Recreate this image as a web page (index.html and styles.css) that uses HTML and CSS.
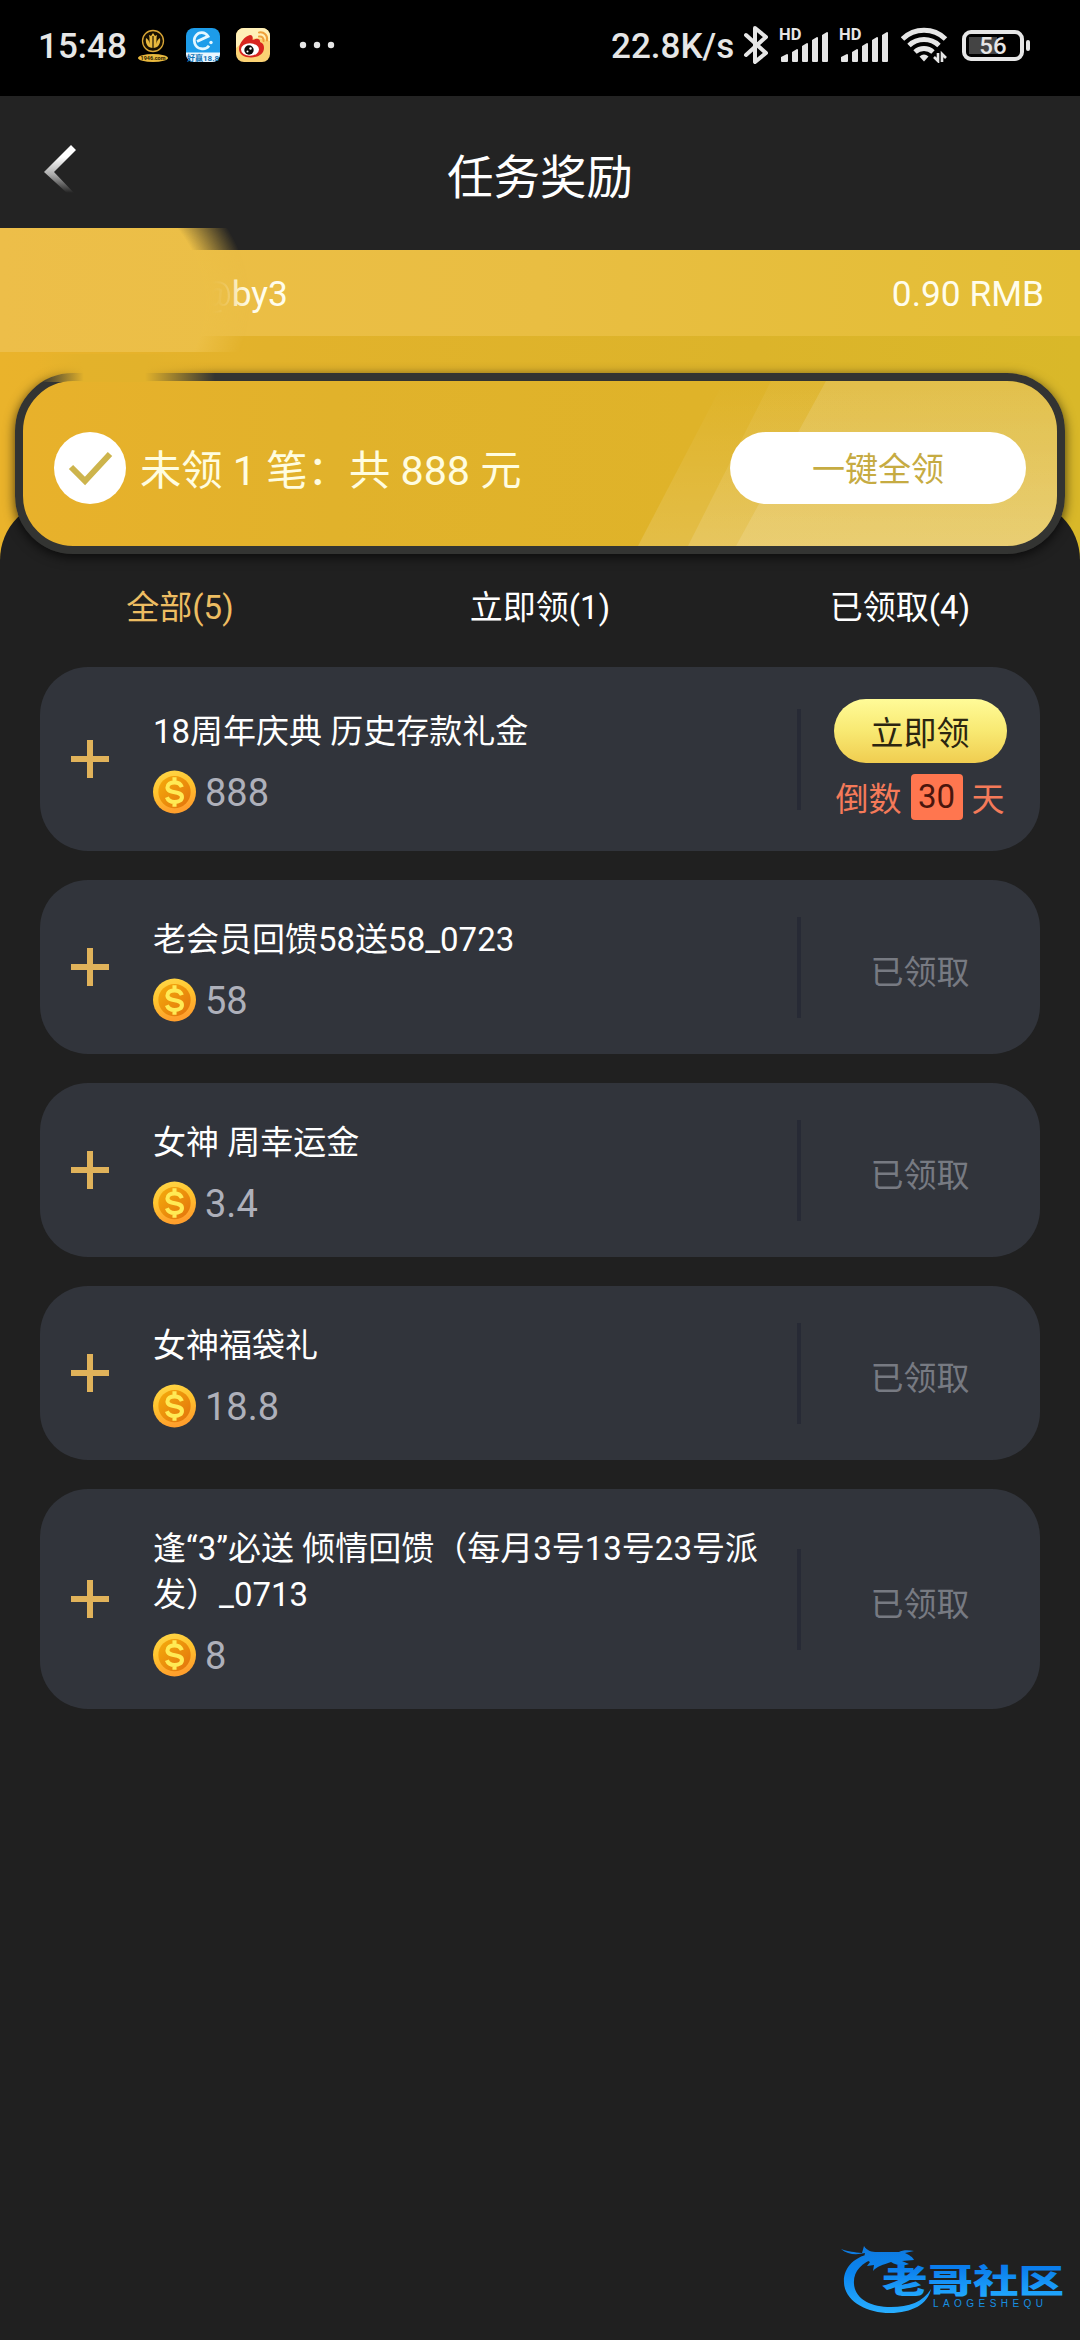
FILE: index.html
```html
<!DOCTYPE html>
<html lang="zh-CN">
<head>
<meta charset="utf-8">
<title>任务奖励</title>
<link rel="stylesheet" href="styles.css">
</head>
<body>
<svg class="defs" width="0" height="0" aria-hidden="true">
  <defs>
    <linearGradient id="coinRim" x1="0" y1="0" x2="0.3" y2="1"><stop offset="0" stop-color="#ffd84a"/><stop offset="0.5" stop-color="#ffc42e"/><stop offset="1" stop-color="#ff9f2c"/></linearGradient>
    <linearGradient id="coinFace" x1="0" y1="0" x2="1" y2="1"><stop offset="0" stop-color="#f5ad0c"/><stop offset="1" stop-color="#e2720c"/></linearGradient>
    <symbol id="coin" viewBox="0 0 44 44">
      <circle cx="22" cy="22" r="22" fill="url(#coinRim)"/>
      <circle cx="22" cy="22" r="16.5" fill="url(#coinFace)"/>
      <path d="M22 7v5M22 32v5M29.500 17c-1.200-3.200-4-4.800-7.500-4.800-4.200 0-7.200 2-7.200 5.200 0 6.600 14.800 3.200 14.800 9.600 0 3.300-3.200 5.200-7.600 5.200-3.800 0-6.600-1.600-7.800-4.800" fill="none" stroke="#ffea55" stroke-width="4.200"/>
    </symbol>
    <symbol id="signal" viewBox="0 0 52 36">
      <path d="M3 35q-1 0-1-1v-4l6-3q1 0 1 1v6q0 1-1 1zM14 35q-1 0-1-1V25l5-3q1 0 1 1v11q0 1-1 1zM24 35q-1 0-1-1V19l5-3q1 0 1 1v17q0 1-1 1zM34 35q-1 0-1-1V13l5-3q1 0 1 1v23q0 1-1 1zM44 35q-1 0-1-1V8l5-3q1 0 1 1v28q0 1-1 1z" fill="#e6e6e6"/>
    </symbol>
  </defs>
</svg>

<div class="statusbar">
  <div class="status-left">
    <span class="clock">15:48</span>
    <svg class="app-icon" viewBox="0 0 34 34">
      <circle cx="17" cy="13" r="10.500" fill="#171002" stroke="#d9a636" stroke-width="1.300"/>
      <path d="M17 20c-5 0-8-4-7-10 2 1 3 3 4 6-1-3 0-6-1-9l2 1 2-3 2 3 2-1c-1 3 0 6-1 9 1-3 2-5 4-6 1 6-2 10-7 10z" fill="#e8b83e"/>
      <path d="M17 8v12" stroke="#171002" stroke-width="1.200"/>
      <ellipse cx="17" cy="30" rx="15" ry="4" fill="#e8b83e"/>
      <text x="17" y="32" text-anchor="middle" class="badge-text">1946.com</text>
    </svg>
    <svg class="app-icon" viewBox="0 0 34 34">
      <rect width="34" height="34" rx="8" fill="#1d9ce9"/>
      <path d="M0 24.500h34V26a8 8 0 0 1-8 8H8a8 8 0 0 1-8-8z" fill="#eaf7ff"/>
      <path d="M11 13.500l11-5.200C19 3.500 13 3.500 10 7.500c-3.500 4.500-1.500 12 5 13.200 3.200.6 6.200-.5 8-3" fill="none" stroke="#e4f7ff" stroke-width="2.800"/>
      <circle cx="25" cy="14.500" r="1.700" fill="#e4f7ff"/>
      <text x="17" y="32.500" text-anchor="middle" class="promo-text">好赢18.8</text>
    </svg>
    <svg class="app-icon" viewBox="0 0 34 34">
      <rect width="34" height="34" rx="8" fill="#fbd274"/>
      <path d="M0 8a8 8 0 0 1 8-8h18a8 8 0 0 1 8 8v5Q16 5 0 20z" fill="#fff0b8"/>
      <path d="M3 21C3 15 9 8 14 7c3 0 3 3 2.500 5 4-2 8-1.500 7.500 2 3 1 4 3 4 6 0 6-6 9.500-13 9.500S3 26 3 21z" fill="#d8251f"/>
      <ellipse cx="14" cy="21.500" rx="9" ry="6.200" fill="#fff"/>
      <circle cx="13" cy="22" r="4.700" fill="#090909"/><circle cx="14.500" cy="20.500" r="1.200" fill="#fff"/><circle cx="11.500" cy="23.500" r="1" fill="#fff"/>
      <path d="M23 8.500c3-.5 5 1.500 4.500 4.500M23 4.500c5-1 9 3 8 8" fill="none" stroke="#efa03a" stroke-width="2" stroke-linecap="round"/>
    </svg>
    <svg class="more" viewBox="0 0 36 8"><g fill="#e6e6e6"><circle cx="4" cy="4" r="3.200"/><circle cx="18" cy="4" r="3.200"/><circle cx="32" cy="4" r="3.200"/></g></svg>
  </div>
  <div class="status-right">
    <span class="speed">22.8K/s</span>
    <svg class="bluetooth" viewBox="0 0 26 40"><path d="M3 10l20 18-11 9V3l11 9L3 30" fill="none" stroke="#e6e6e6" stroke-width="4" stroke-linejoin="round" stroke-linecap="round"/></svg>
    <div class="cell"><svg viewBox="0 0 52 36"><use href="#signal"/></svg><span class="hd">HD</span></div>
    <div class="cell"><svg viewBox="0 0 52 36"><use href="#signal"/></svg><span class="hd">HD</span></div>
    <svg class="wifi" viewBox="0 0 48 36">
      <g fill="none" stroke="#e6e6e6" stroke-width="5"><path d="M1.500 12a31 31 0 0 1 43 0"/><path d="M8 18.500a22 22 0 0 1 30 0"/><path d="M14 25a13.500 13.500 0 0 1 18 0"/></g>
      <path d="M18.500 29.500q4.500-4 9 0L23 34.500z" fill="#e6e6e6"/>
      <path d="M36 25v9l-4-4M41 35v-9l4 4" fill="none" stroke="#000" stroke-width="5"/>
      <path d="M37 26v8l-4-4M41 35v-8l4 4" fill="none" stroke="#e6e6e6" stroke-width="2.600"/>
    </svg>
    <div class="battery"><div class="battery-body"><span>56</span></div><div class="battery-tip"></div></div>
  </div>
</div>

<header class="appbar">
  <svg class="back" viewBox="0 0 36 52">
    <defs><linearGradient id="fade" x1="0" y1="0" x2="0" y2="1"><stop offset="0.25" stop-color="#fff"/><stop offset="0.62" stop-color="#aaa"/><stop offset="1" stop-color="#222"/></linearGradient></defs>
    <path d="M31 1l5 5-22 22 20 21h-7L4 28z" fill="url(#fade)"/>
  </svg>
  <h1>任务奖励</h1>
</header>

<section class="hero">
  <div class="balance">
    <span class="user"><span class="at">@</span>by3</span>
    <span>0.90 RMB</span>
  </div>
  <div class="claim">
    <svg class="shine" viewBox="0 0 1034 165" preserveAspectRatio="none">
      <defs>
        <linearGradient id="s1" x1="0" y1="0" x2="0" y2="1"><stop offset="0" stop-color="#fff" stop-opacity="0"/><stop offset="1" stop-color="#fff" stop-opacity=".14"/></linearGradient>
        <linearGradient id="s2" x1="0" y1="0" x2="0" y2="1"><stop offset="0" stop-color="#fff" stop-opacity=".04"/><stop offset="1" stop-color="#fff" stop-opacity=".13"/></linearGradient>
      </defs>
      <path d="M701 0H1034V165H615z" fill="url(#s1)"/>
      <path d="M748 0H1034V165H665z" fill="url(#s2)"/>
      <path d="M803 0H1034V165H713z" fill="#fff" fill-opacity=".12"/>
    </svg>
    <svg class="check" viewBox="0 0 72 72"><circle cx="36" cy="36" r="36" fill="#fff"/><path d="M17 35l14 14 25-27" fill="none" stroke="#cdb44c" stroke-width="6"/></svg>
    <p class="claim-text">未领 1 笔：共 888 元</p>
    <button class="claim-all">一键全领</button>
  </div>
  <div class="smudge"></div>
  <div class="edge-smudge"></div>
</section>

<main class="panel">
  <nav class="tabs">
    <a class="active">全部(5)</a>
    <a>立即领(1)</a>
    <a>已领取(4)</a>
  </nav>
  <div class="list">
    <article class="task open">
      <i class="plus"></i>
      <div class="info"><h2>18周年庆典 历史存款礼金</h2><div class="amount"><svg><use href="#coin"/></svg>888</div></div>
      <i class="divider"></i>
      <div class="action">
        <button class="get">立即领</button>
        <div class="countdown"><span>倒数</span><b>30</b><span>天</span></div>
      </div>
    </article>
    <article class="task">
      <i class="plus"></i>
      <div class="info"><h2>老会员回馈58送58_0723</h2><div class="amount"><svg><use href="#coin"/></svg>58</div></div>
      <i class="divider"></i>
      <div class="action done">已领取</div>
    </article>
    <article class="task">
      <i class="plus"></i>
      <div class="info"><h2>女神 周幸运金</h2><div class="amount"><svg><use href="#coin"/></svg>3.4</div></div>
      <i class="divider"></i>
      <div class="action done">已领取</div>
    </article>
    <article class="task">
      <i class="plus"></i>
      <div class="info"><h2>女神福袋礼</h2><div class="amount"><svg><use href="#coin"/></svg>18.8</div></div>
      <i class="divider"></i>
      <div class="action done">已领取</div>
    </article>
    <article class="task">
      <i class="plus"></i>
      <div class="info"><h2>逢“3”必送 倾情回馈（每月3号13号23号派发）_0713</h2><div class="amount"><svg><use href="#coin"/></svg>8</div></div>
      <i class="divider"></i>
      <div class="action done">已领取</div>
    </article>
  </div>
</main>

<svg class="watermark" viewBox="0 0 230 80">
  <defs><linearGradient id="wm" gradientUnits="userSpaceOnUse" x1="0" y1="5" x2="0" y2="75"><stop offset="0" stop-color="#0f78dc"/><stop offset="0.400" stop-color="#0a85f0"/><stop offset="1" stop-color="#2ab0ff"/></linearGradient>
  <linearGradient id="wt" gradientUnits="userSpaceOnUse" x1="0" y1="27" x2="0" y2="58"><stop offset="0" stop-color="#0a7cec"/><stop offset="1" stop-color="#22aaff"/></linearGradient></defs>
  <g fill="url(#wm)">
    <path d="M34 13C14 16 3 28 4 43c1 18 22 30 46 30 22 0 38-9 41-24-8 13-22 18-40 18-20 0-36-8-37-23-1-12 7-21 21-26z"/>
    <path d="M1 9c8 3 13 3 21 4l2-7c3 5 8 6 13 6h22c3-2 10-2 15-1l-9 2c4 2 8 4 9 7l-12 1 7 3c-5 2-12 2-18-2-8 3-14 4-18 9l1-6-7 1 3-4c-5-2-6-7-5-9-8 2-17 2-24-4z"/>
  </g>
  <text class="wm-name" x="42" y="53" textLength="182" lengthAdjust="spacingAndGlyphs" fill="url(#wt)">老哥社区</text>
  <text class="wm-sub" x="93" y="67" textLength="110" fill="#178fe0">LAOGESHEQU</text>
</svg>
</body>
</html>
```
FILE: styles.css
```css
* { box-sizing: border-box; margin: 0; padding: 0; }
body {
  position: relative;
  width: 1080px;
  height: 2340px;
  overflow: hidden;
  display: flex;
  flex-direction: column;
  background: #202020;
  color: #fff;
  font-family: Roboto, "Noto Sans CJK SC", sans-serif;
}
button { border: 0; font: inherit; }
.defs { position: absolute; }

/* Status bar */
.statusbar {
  flex: none;
  height: 96px;
  padding: 0 50px 6px 38px;
  display: flex;
  align-items: center;
  justify-content: space-between;
  background: #000;
  color: #e6e6e6;
}
.status-left, .status-right { display: flex; align-items: center; }
.clock, .speed { font-size: 35px; font-weight: 500; line-height: 40px; padding-top: 3px; }
.clock { width: 98px; }
.app-icon { width: 34px; height: 34px; margin-right: 16px; }
.badge-text { font: 700 5.5px Roboto, sans-serif; fill: #2a1c00; }
.promo-text { font: 700 8px Roboto, "Noto Sans CJK SC", sans-serif; fill: #1173b6; }
.more { width: 36px; height: 8px; margin-left: 13px; }
.speed { width: 132px; }
.bluetooth { width: 26px; height: 40px; margin-right: 10px; }
.cell { position: relative; width: 52px; height: 36px; margin-right: 8px; }
.cell svg { display: block; width: 52px; height: 36px; }
.hd { position: absolute; left: 0; top: 0; font-size: 16.5px; font-weight: 700; line-height: 16px; background: transparent; }
.wifi { width: 48px; height: 36px; margin: 0 13px 0 2px; }
.battery { display: flex; align-items: center; gap: 2px; }
.battery-body {
  width: 62px;
  height: 31px;
  border: 4px solid #e6e6e6;
  border-radius: 9px;
  display: grid;
  place-items: center;
  font-size: 24px;
  font-weight: 500;
  line-height: 24px;
  background: linear-gradient(#444, #444) 3px 3px / 28px 17px no-repeat padding-box;
}
.battery-tip { width: 4px; height: 11px; border-radius: 2px; background: #e6e6e6; }

/* Title bar */
.appbar {
  flex: none;
  height: 154px;
  padding: 10px 40px 0;
  display: grid;
  grid-template-columns: 60px 1fr 60px;
  align-items: center;
  background: #232323;
}
.back { width: 36px; height: 52px; margin-top: -16px; }
h1 { font-size: 46.5px; font-weight: 400; line-height: 60px; text-align: center; }

/* Balance and claim card */
.hero {
  position: relative;
  flex: none;
  height: 310px;
  background: linear-gradient(90deg, #eab32b, #e2b22b 25%, #dcb42a 70%, #d9b829);
}
.balance {
  height: 86px;
  padding: 3px 36px 0 200px;
  display: flex;
  align-items: center;
  justify-content: space-between;
  background: linear-gradient(90deg, #edbe47, #e9be42 50%, #e3be35);
  color: #fffdec;
  font-size: 35.3px;
  line-height: 83px;
}
.at { color: transparent; background: linear-gradient(90deg, transparent 35%, #fff6) text; }
.claim {
  position: relative;
  z-index: 2;
  height: 181px;
  margin: 37px 15px 0;
  padding: 0 31px;
  display: flex;
  align-items: center;
  border: 8px solid #333432;
  border-radius: 58px;
  background: linear-gradient(90deg, #e8b12b, #e1b22b 30%, #dfb329 65%, #ddb52b);
  box-shadow: 0 3px 12px rgba(0, 0, 0, .7);
}
.shine { position: absolute; left: 0; top: 0; width: 100%; height: 100%; border-radius: 50px; }
.check { width: 72px; height: 72px; margin: 8px 14px 0 0; position: relative; }
.claim-text { flex: 1; position: relative; font-size: 41.3px; line-height: 56px; color: #fffde0; padding-top: 14px; }
.claim-all {
  position: relative;
  width: 296px;
  height: 72px;
  margin-top: 8px;
  padding-top: 4px;
  border-radius: 36px;
  background: #fff;
  color: #c6ab42;
  font-size: 33px;
  line-height: 68px;
}
/* Soft patch over the account name */
.smudge {
  position: absolute;
  left: 0;
  top: -22px;
  width: 250px;
  height: 124px;
  background: linear-gradient(90deg, #edbe49, #ebbf46);
  -webkit-mask-image: radial-gradient(ellipse 250px 180px at 0 60%, #000 82%, transparent 100%);
  mask-image: radial-gradient(ellipse 250px 180px at 0 60%, #000 82%, transparent 100%);
}
.edge-smudge {
  position: absolute;
  z-index: 3;
  left: 40px;
  top: 104px;
  width: 175px;
  height: 28px;
  background: linear-gradient(90deg, transparent, #e3b22b 25%, #e2b22b 60%, transparent);
}

/* Task list */
.panel {
  position: relative;
  flex: 1;
  margin-top: -60px;
  padding-top: 75px;
  border-radius: 60px 60px 0 0;
  background: #202020;
}
.tabs {
  display: grid;
  grid-template-columns: repeat(3, 1fr);
  height: 92px;
  text-align: center;
  font-size: 33px;
  line-height: 66px;
}
.tabs .active { color: #edbd62; }
.list { display: flex; flex-direction: column; gap: 29px; padding: 0 40px; }
.task {
  display: grid;
  grid-template-columns: 113px 615px 28px 4px 1fr;
  align-items: center;
  min-height: 174px;
  padding: 37px 0 31px;
  border-radius: 48px;
  background: #31343b;
}
.task.open { min-height: 184px; padding: 0; }
.plus {
  width: 38px;
  height: 38px;
  margin: -6px 0 0 31px;
  background: linear-gradient(#e0b25a, #e0b25a) center / 38px 6px no-repeat, linear-gradient(#e0b25a, #e0b25a) center / 6px 38px no-repeat;
}
.open .plus { margin-top: 0; }
.info { display: flex; flex-direction: column; gap: 16px; }
.open .info { padding-top: 5px; }
.info h2 { font-size: 33px; font-weight: 400; line-height: 46px; }
.amount { display: flex; align-items: center; gap: 9px; height: 44px; font-size: 38px; line-height: 44px; color: #aeb0ba; }
.amount svg { width: 43px; height: 44px; margin-top: -2px; }
.divider { grid-column: 4; width: 4px; height: 101px; margin: -20px 0 -14px 1px; background: #272a35; }
.open .divider { margin: 0 0 0 1px; }
.action { justify-self: center; text-align: center; font-size: 33px; }
.done { color: #777a82; padding-top: 6px; line-height: 44px; }
.open .action { display: flex; flex-direction: column; align-items: center; gap: 11px; }
.get {
  width: 173px;
  height: 64px;
  padding-top: 6px;
  border-radius: 32px;
  background: linear-gradient(#fffb98, #f8e972 50%, #f0cd50);
  color: #2b2510;
  font-size: 33px;
  line-height: 58px;
}
.countdown { display: flex; align-items: center; gap: 9px; height: 46px; color: #f47a59; line-height: 46px; }
.countdown span { padding-top: 6px; }
.countdown b { width: 52px; height: 46px; border-radius: 4px; background: #ff764f; color: #4b160d; font-weight: 400; line-height: 46px; }

/* Community watermark */
.watermark { position: absolute; left: 840px; top: 2240px; width: 230px; height: 80px; }
.wm-name { font: 900 33px/33px "Noto Sans CJK SC", sans-serif; }
.wm-sub { font: 500 10px/10px "Liberation Sans", sans-serif; }
```
